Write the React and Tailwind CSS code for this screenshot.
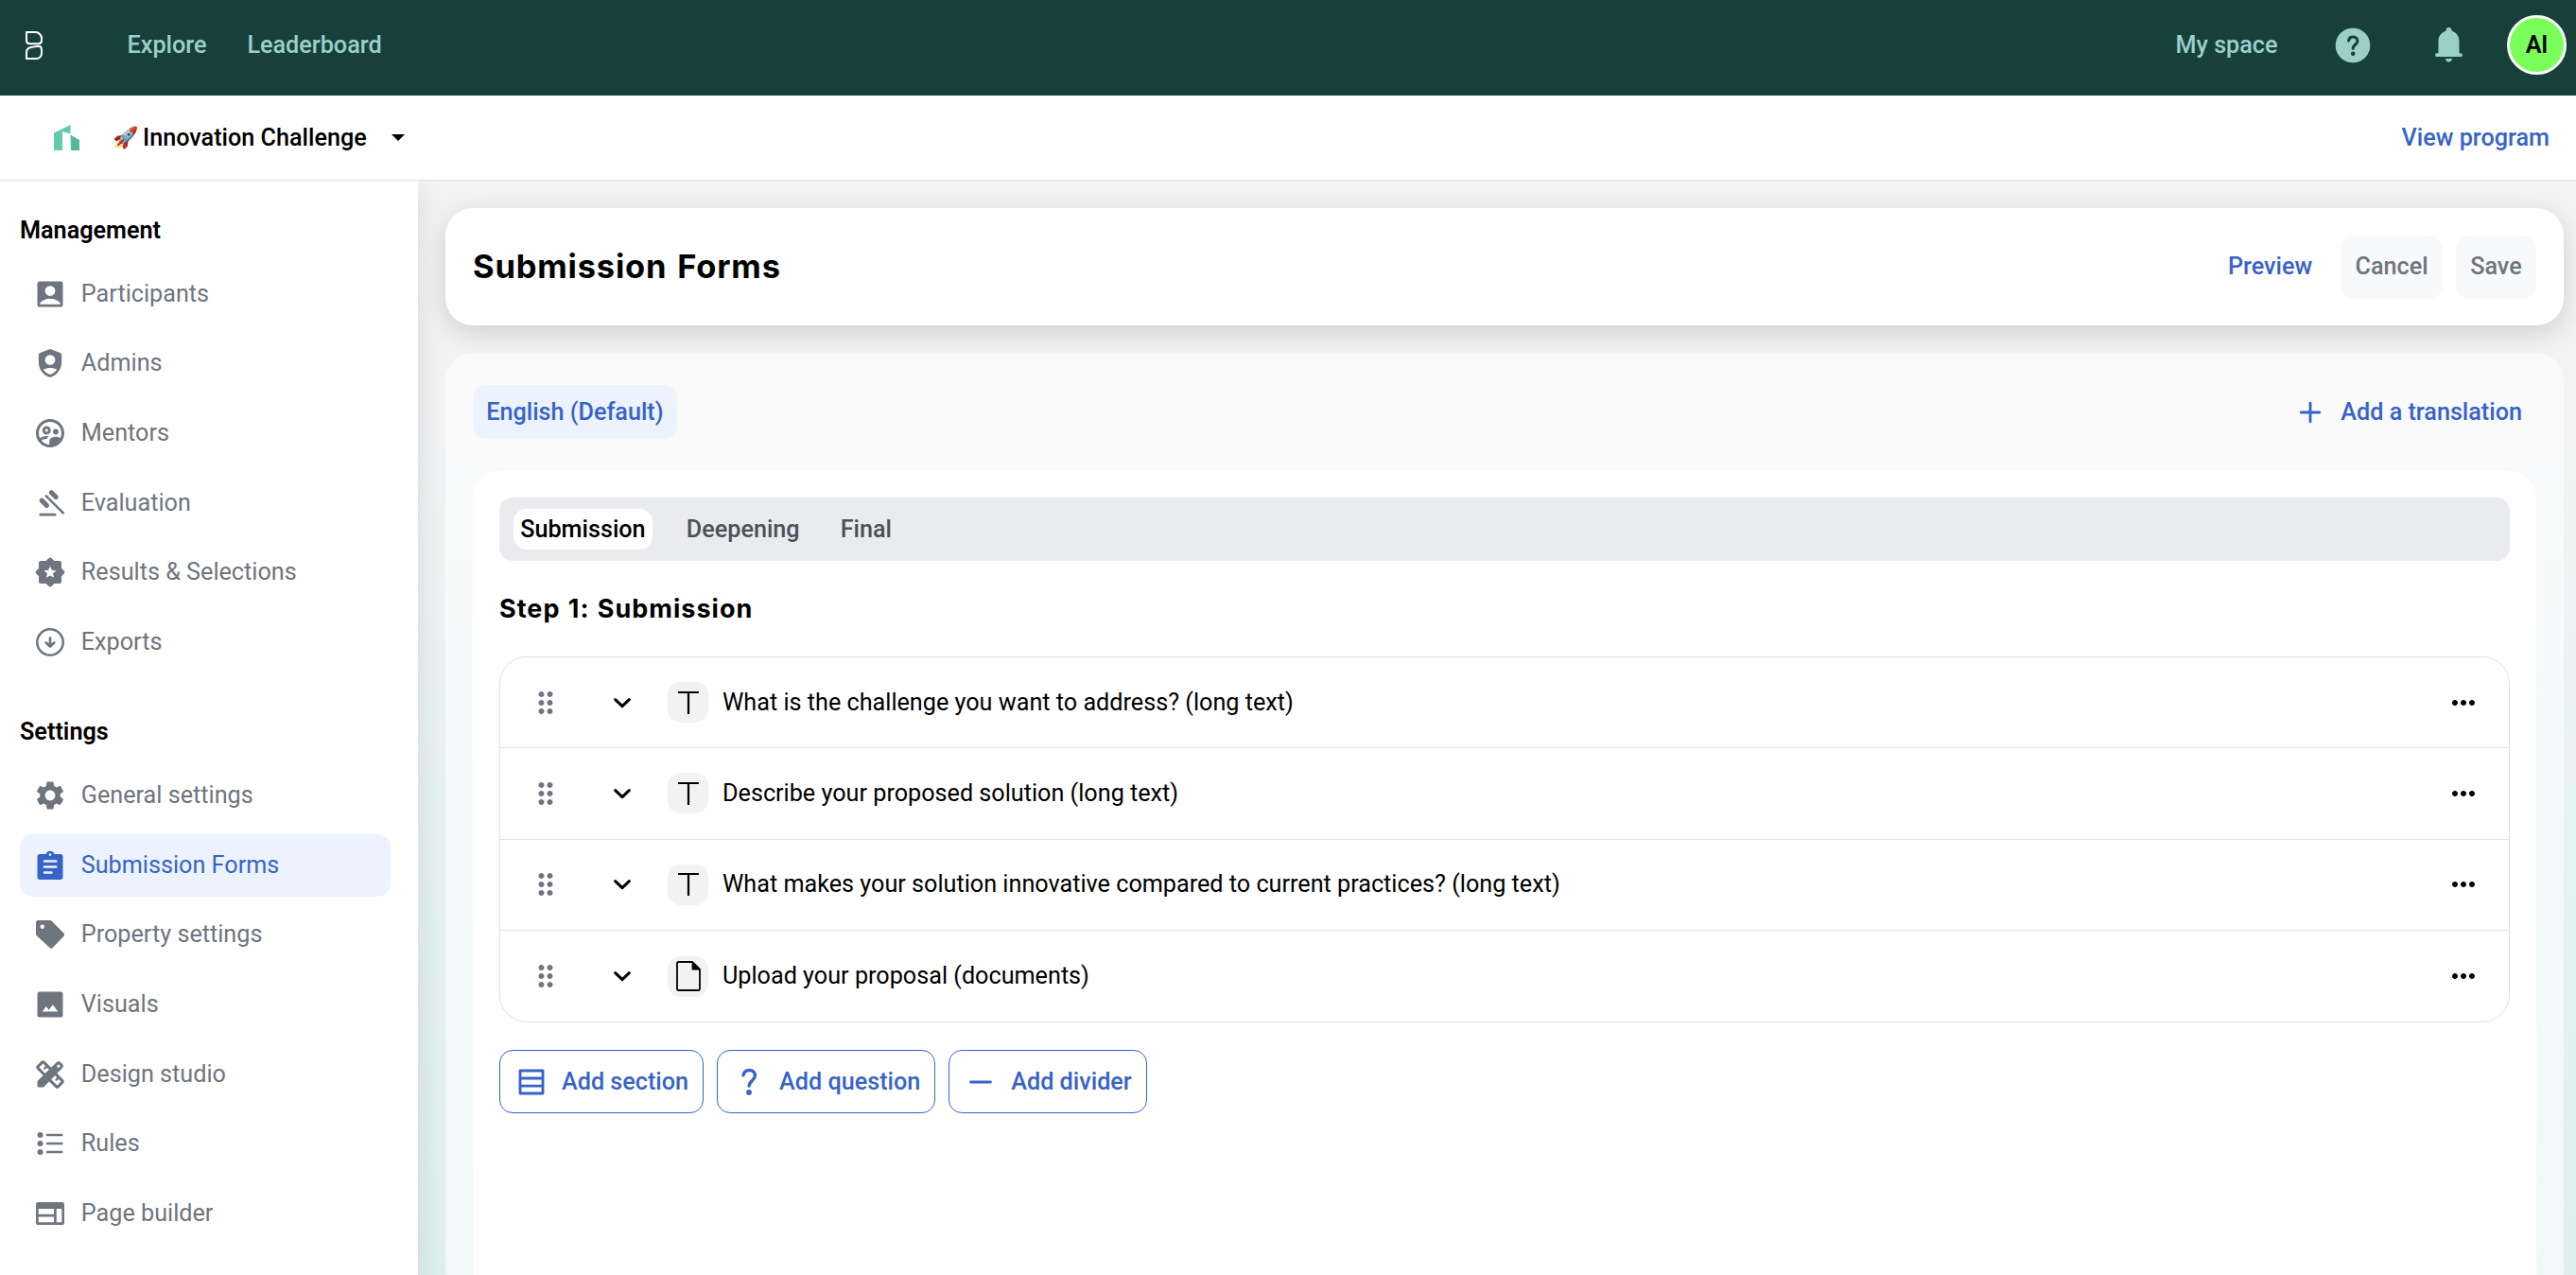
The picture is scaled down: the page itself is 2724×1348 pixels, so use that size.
import { MdSettings, MdOutlineSupervisedUserCircle, MdDragIndicator, MdMoreHoriz } from 'react-icons/md';

const Svg = ({ className = 'size-9', children }) => (
  <svg viewBox="0 0 24 24" className={`${className} shrink-0`} fill="currentColor">{children}</svg>
);

const line = { fill: 'none', stroke: 'currentColor', strokeLinecap: 'round', strokeLinejoin: 'round' };

const AccountIcon = () => (
  <Svg><path fillRule="evenodd" d="M4.7 3h14.6A1.7 1.7 0 0 1 21 4.7v14.6a1.7 1.7 0 0 1-1.7 1.7H4.7A1.7 1.7 0 0 1 3 19.3V4.7A1.7 1.7 0 0 1 4.7 3ZM12 6.1a3.6 3.6 0 1 0 0 7.2a3.6 3.6 0 0 0 0-7.2ZM4.9 18.2v1h14.2v-1C17.3 16.3 14.9 15.2 12 15.2s-5.3 1.1-7.1 3Z" /></Svg>
);

const ShieldIcon = () => (
  <Svg><path fillRule="evenodd" d="M12.5 2.2l6.5 2.4c.7.3 1.1.8 1.1 1.5v5c0 5-3.3 9.5-8.1 10.9C7.2 20.6 3.9 16.1 3.9 11.1v-5c0-.7.4-1.2 1.1-1.5l6.5-2.4c.3-.1.7-.1 1 0ZM12 6.1a3.6 3.6 0 1 0 0 7.2a3.6 3.6 0 0 0 0-7.2ZM7.2 16.5c1.2 1.6 2.9 2.9 4.8 3.5c1.9-.6 3.6-1.9 4.8-3.5c-1.4-.8-3-1.2-4.8-1.2s-3.4.4-4.8 1.2Z" /></Svg>
);

const GavelIcon = () => (
  <Svg>
    <path d="M5.2 20.1h10.200" {...line} strokeWidth="1.8" />
    <path d="m9.2 6.9 12 12" {...line} strokeWidth="1.7" />
    <path d="m12.9 4.5 3.2 3.2M6.1 10.1l3.5 3.5" {...line} strokeWidth="3.4" />
  </Svg>
);

const BadgeIcon = () => (
  <Svg>
    <rect x="4" y="4" width="16" height="16" rx="1.5" />
    <rect x="4.3" y="4.3" width="15.4" height="15.4" rx="1.5" transform="rotate(45 12 12)" />
    <path fill="#fff" d="m12 7.6 1.25 2.85 3.1.3-2.35 2.05.7 3.05L12 14.25l-2.7 1.6.7-3.05-2.35-2.05 3.1-.3Z" />
  </Svg>
);

const DownloadIcon = () => (
  <Svg>
    <circle cx="12" cy="12" r="9.15" {...line} strokeWidth="1.7" />
    <path d="M12 9v5.8M9.1 12.3l2.9 2.7 2.9-2.7" {...line} strokeWidth="1.8" />
  </Svg>
);

const ClipboardIcon = () => (
  <Svg><path fillRule="evenodd" d="M4.8 4h4.3a3 3 0 0 1 5.8 0h4.3A1.8 1.8 0 0 1 21 5.8v14.4a1.8 1.8 0 0 1-1.8 1.8H4.8A1.8 1.8 0 0 1 3 20.2V5.8A1.8 1.8 0 0 1 4.8 4ZM12 3.5a.9.9 0 1 0 0 1.8a.9.9 0 0 0 0-1.8ZM8 8.1a.85.85 0 0 0 0 1.7h8.2a.85.85 0 0 0 0-1.7ZM8 12.1a.85.85 0 0 0 0 1.7h8.2a.85.85 0 0 0 0-1.7ZM8 16.1a.85.85 0 0 0 0 1.7h5a.85.85 0 0 0 0-1.7Z" /></Svg>
);

const TagIcon = () => (
  <Svg><path fillRule="evenodd" d="M3.7 2h8.1c.5 0 1 .2 1.3.5l8.5 8.5c.6.6.6 1.5 0 2.1l-7.8 8.3c-.6.6-1.5.6-2.1 0L2.5 12.9c-.3-.3-.5-.8-.5-1.3V3.7C2 2.7 2.7 2 3.7 2ZM6.5 5a1.5 1.5 0 1 0 0 3a1.5 1.5 0 0 0 0-3Z" /></Svg>
);

const ImageIcon = () => (
  <Svg><path fillRule="evenodd" d="M4.7 3h14.6A1.7 1.7 0 0 1 21 4.7v14.6a1.7 1.7 0 0 1-1.7 1.7H4.7A1.7 1.7 0 0 1 3 19.3V4.7A1.7 1.7 0 0 1 4.7 3ZM6.5 17h11l-3.6-4.8-2.8 3.6-1.9-2.5Z" /></Svg>
);

const DesignIcon = () => (
  <Svg>
    <g transform="rotate(45 12 12)">
      <rect x="2" y="9.1" width="20" height="5.8" rx=".8" {...line} strokeWidth="2" />
      <path d="M6.3 9.5v2.2M17.7 9.5v2.2" {...line} strokeWidth="1.5" />
    </g>
    <path d="M3 16.6 16.6 3.3c.8-.8 1.9-.8 2.7 0l1.4 1.4c.8.8.8 1.9 0 2.7L7.4 21H3.8c-.5 0-.8-.3-.8-.8Z" />
    <path fill="#fff" d="m17.9 4.9 1.3 1.3-1.3 1.3-1.3-1.3Z" />
  </Svg>
);

const ListIcon = () => (
  <Svg>
    <circle cx="5" cy="6" r="2" /><circle cx="5" cy="12" r="2" /><circle cx="5" cy="18" r="2" />
    <path d="M10 6h10.2M10 12h10.2M10 18h10.2" {...line} strokeWidth="1.7" />
  </Svg>
);

const WebIcon = () => (
  <Svg><path fillRule="evenodd" d="M3.7 4h16.6A1.7 1.7 0 0 1 22 5.7v12.6a1.7 1.7 0 0 1-1.7 1.7H3.7A1.7 1.7 0 0 1 2 18.3V5.7A1.7 1.7 0 0 1 3.7 4ZM3.8 8.7v3.8h10.9V8.7ZM3.8 14.3v3.9h10.9v-3.9ZM16.5 8.7v9.5h3.7V8.7Z" /></Svg>
);

const TextIcon = () => (
  <svg viewBox="0 0 24 26" className="h-[26px] w-6" {...line} strokeWidth="2.2" strokeLinecap="square"><path d="M2.2 2h19.6M12 2v22" /></svg>
);

const FileIcon = () => (
  <svg viewBox="0 0 26 32" className="h-8 w-[26px]" {...line} strokeWidth="1.8"><path d="M2.5 1h14.3l8.2 8.2v20.3c0 .8-.7 1.5-1.5 1.5h-21c-.8 0-1.5-.7-1.5-1.5v-27C1 1.7 1.7 1 2.5 1Z" /><path d="M17.5 1.5v7.2h7.2Z" fill="currentColor" /></svg>
);

const management = [
  { label: 'Participants', icon: AccountIcon },
  { label: 'Admins', icon: ShieldIcon },
  { label: 'Mentors', icon: () => <MdOutlineSupervisedUserCircle className="size-9 shrink-0" /> },
  { label: 'Evaluation', icon: GavelIcon },
  { label: 'Results & Selections', icon: BadgeIcon },
  { label: 'Exports', icon: DownloadIcon },
];

const settings = [
  { label: 'General settings', icon: () => <MdSettings className="size-9 shrink-0" /> },
  { label: 'Submission Forms', icon: ClipboardIcon, active: true },
  { label: 'Property settings', icon: TagIcon },
  { label: 'Visuals', icon: ImageIcon },
  { label: 'Design studio', icon: DesignIcon },
  { label: 'Rules', icon: ListIcon },
  { label: 'Page builder', icon: WebIcon },
];

const questions = [
  { text: 'What is the challenge you want to address? (long text)', icon: TextIcon },
  { text: 'Describe your proposed solution (long text)', icon: TextIcon },
  { text: 'What makes your solution innovative compared to current practices? (long text)', icon: TextIcon },
  { text: 'Upload your proposal (documents)', icon: FileIcon },
];

function NavGroup({ title, items }) {
  return (
    <div>
      <h2 className="h-8 font-semibold leading-8 text-black">{title}</h2>
      <nav className="mt-[17.5px] flex flex-col gap-[7.7px]">
        {items.map(({ label, icon: Icon, active }) => (
          <a key={label} className={`flex h-[66px] items-center gap-[14.4px] rounded-[14px] px-[14.4px] ${active ? 'bg-[#ecf3fe] text-[#3763c8]' : 'text-[#6e757e]'}`}>
            <Icon />
            {label}
          </a>
        ))}
      </nav>
    </div>
  );
}

function OutlineButton({ icon, label }) {
  return (
    <button className="flex h-[67px] items-center gap-[14px] rounded-[14px] border border-[#3763c8] px-[15px] font-medium text-[#3763c8]">
      {icon}
      {label}
    </button>
  );
}

export default function App() {
  return (
    <div className="flex h-[1348px] w-[2724px] flex-col overflow-hidden bg-white font-['Roboto',sans-serif] text-[25.2px] leading-[34px] text-black">
      <header className="flex h-[101px] shrink-0 items-center bg-[#18403b] pb-[6px] pl-[27px] pr-[10px] font-medium text-[#9bd0ca]">
        <svg viewBox="0 0 18 30" className="h-[30px] w-[18px]" {...line} stroke="#fff" strokeWidth="2">
          <path d="M1 1h9.5a6.7 6.7 0 0 1 6.5 6.5v2.3c0 2.2-1.2 3.4-3.3 3.4H4.5C2.2 13.2 1 12 1 9.8Z" />
          <path d="M1 29h10.5a5.5 5.5 0 0 0 5.5-5.5v-3.3c0-2.6-1.2-4.4-3.5-4.4l-5 .7C3.8 17 1 18.6 1 22Z" />
        </svg>
        <a className="ml-[89.5px]">Explore</a>
        <a className="ml-[43px]">Leaderboard</a>
        <a className="ml-auto">My space</a>
        <Svg className="ml-[57px] size-[44px]">
          <circle cx="12" cy="12" r="10" />
          <path d="M9.6 9.3c.2-1.4 1.1-2.2 2.5-2.2 1.5 0 2.6.9 2.6 2.3 0 2.1-2.6 2.3-2.6 4.4" {...line} stroke="#18403b" strokeWidth="1.7" />
          <circle cx="12.1" cy="16.8" r="1.25" fill="#18403b" />
        </Svg>
        <svg viewBox="0 0 29 37" className="ml-[65px] h-[37px] w-[29px]" fill="currentColor">
          <path d="M14.5 0c1.700 0 3 1.300 3 3v.7c4.600 1.300 8 5.300 8 10.300v13.300h1.500a1.900 1.900 0 0 1 0 3.800H1.900a1.900 1.900 0 0 1 0-3.800h1.600V14c0-5 3.400-9 8-10.300V3c0-1.700 1.300-3 3-3ZM11 33h7c0 2-1.600 3.600-3.500 3.600S11 35 11 33Z" />
        </svg>
        <div className="ml-[47.5px] flex size-[63px] items-center justify-center rounded-full border-[3px] border-white bg-[#7bff5a] font-semibold text-black">Al</div>
      </header>

      <div className="flex h-[90px] shrink-0 items-center border-b border-[#dee0e5] pl-[57px] pr-[28px] font-medium">
        <svg viewBox="0 0 27 27" className="h-[27px] w-[27px]">
          <path d="M0 8.5 17.5 0v9.5L9 7v20H0Z" fill="#62cbae" />
          <path d="M17.5 10.5 27 16v11h-9Z" fill="#52b79c" />
        </svg>
        <span className="ml-[35px] flex items-center">
          <span className="mr-[6px] w-[26px] whitespace-nowrap text-[22px]">🚀</span>
          Innovation Challenge
        </span>
        <svg viewBox="0 0 14 7" className="ml-[26px] h-[7px] w-[14px]"><path d="M0 0h14L7 7Z" /></svg>
        <a className="ml-auto text-[#3763c8]">View program</a>
      </div>

      <div className="flex min-h-0 flex-1">
        <aside className="z-10 flex w-[442px] shrink-0 flex-col gap-[46.5px] bg-white pl-[21px] pr-[29px] pt-[37px] shadow-[0_8px_29px_rgba(0,0,0,0.11)] [clip-path:inset(0_-40px_0_0)]">
          <NavGroup title="Management" items={management} />
          <NavGroup title="Settings" items={settings} />
        </aside>

        <main className="flex min-w-0 flex-1 flex-col bg-linear-[to_bottom,#f3f3f3_0%,#f3f3f4_20%,#e8f1f1_55%,#ddf0ee_100%] pl-[29px] pr-[13px] pt-[29px]">
          <div className="flex h-[124px] shrink-0 items-center rounded-[29px] bg-white px-[29px] shadow-[0_8px_29px_rgba(0,0,0,0.15)]">
            <h1 className="font-['Inter',sans-serif] text-[34.5px] font-bold tracking-[.8px] [word-spacing:2px]">Submission Forms</h1>
            <button className="ml-auto mr-[30px] font-medium text-[#3763c8]">Preview</button>
            <button className="mr-[14px] h-[67px] rounded-[14px] bg-[#f8f9fb] px-[15.3px] font-medium text-[#6e757e]">Cancel</button>
            <button className="h-[67px] rounded-[14px] bg-[#f8f9fb] px-[15.3px] font-medium text-[#6e757e]">Save</button>
          </div>

          <section className="mt-[29px] flex flex-1 flex-col rounded-t-[29px] bg-white/60 px-[29px] pt-[34px]">
            <div className="flex h-[57px] shrink-0 items-center justify-between font-medium text-[#3763c8]">
              <div className="flex h-[57px] items-center rounded-[14px] bg-[#ecf3fe] px-[14.2px]">English (Default)</div>
              <button className="flex items-center gap-[14px] pr-[15px]">
                <Svg><path d="M12 5.5v13M5.5 12h13" {...line} strokeWidth="1.9" /></Svg>
                Add a translation
              </button>
            </div>

            <div className="mt-[34px] flex flex-1 flex-col rounded-t-[29px] bg-white px-[28px] pt-[28px]">
              <div className="flex h-[67px] shrink-0 items-center rounded-[14px] bg-[#e9ebef] pl-[15px] font-medium text-[#4b5158]">
                <span className="flex h-[43px] items-center rounded-[14px] bg-white px-[7.2px] text-black">Submission</span>
                <span className="ml-[36px]">Deepening</span>
                <span className="ml-[43px]">Final</span>
              </div>

              <h3 className="mt-[34px] font-['Inter',sans-serif] text-[27px] font-bold tracking-[1px] [word-spacing:1px]">Step 1: Submission</h3>

              <div className="mt-[33px] flex flex-col divide-y divide-[#dee0e5] rounded-[29px] border border-[#dee0e5]">
                {questions.map(({ text, icon: Icon }) => (
                  <div key={text} className="flex h-[96.3px] items-center px-[30px]">
                    <MdDragIndicator className="size-9 text-[#6e757e]" />
                    <Svg className="ml-[45px] size-9"><path d="m7.1 9.7 4.9 4.7 4.9-4.7" {...line} strokeWidth="2" /></Svg>
                    <span className="ml-[30px] flex size-[43px] items-center justify-center rounded-[14px] bg-[#f2f2f2]"><Icon /></span>
                    <span className="ml-[15px]">{text}</span>
                    <MdMoreHoriz className="ml-auto size-9" />
                  </div>
                ))}
              </div>

              <div className="mt-[29px] flex gap-[14px]">
                <OutlineButton label="Add section" icon={<Svg><path d="M4 4h16v16H4ZM4 9.3h16M4 14.7h16" {...line} strokeWidth="1.9" /></Svg>} />
                <OutlineButton label="Add question" icon={<Svg><path d="M8 7.2c.4-2.2 1.9-3.5 4.2-3.5 2.4 0 4.1 1.5 4.1 3.7 0 3.4-4.2 3.8-4.2 7.3" {...line} strokeWidth="2.3" /><circle cx="12" cy="19.3" r="1.9" /></Svg>} />
                <OutlineButton label="Add divider" icon={<Svg><path d="M5 12h14" {...line} strokeWidth="1.9" /></Svg>} />
              </div>
            </div>
          </section>
        </main>
      </div>
    </div>
  );
}
